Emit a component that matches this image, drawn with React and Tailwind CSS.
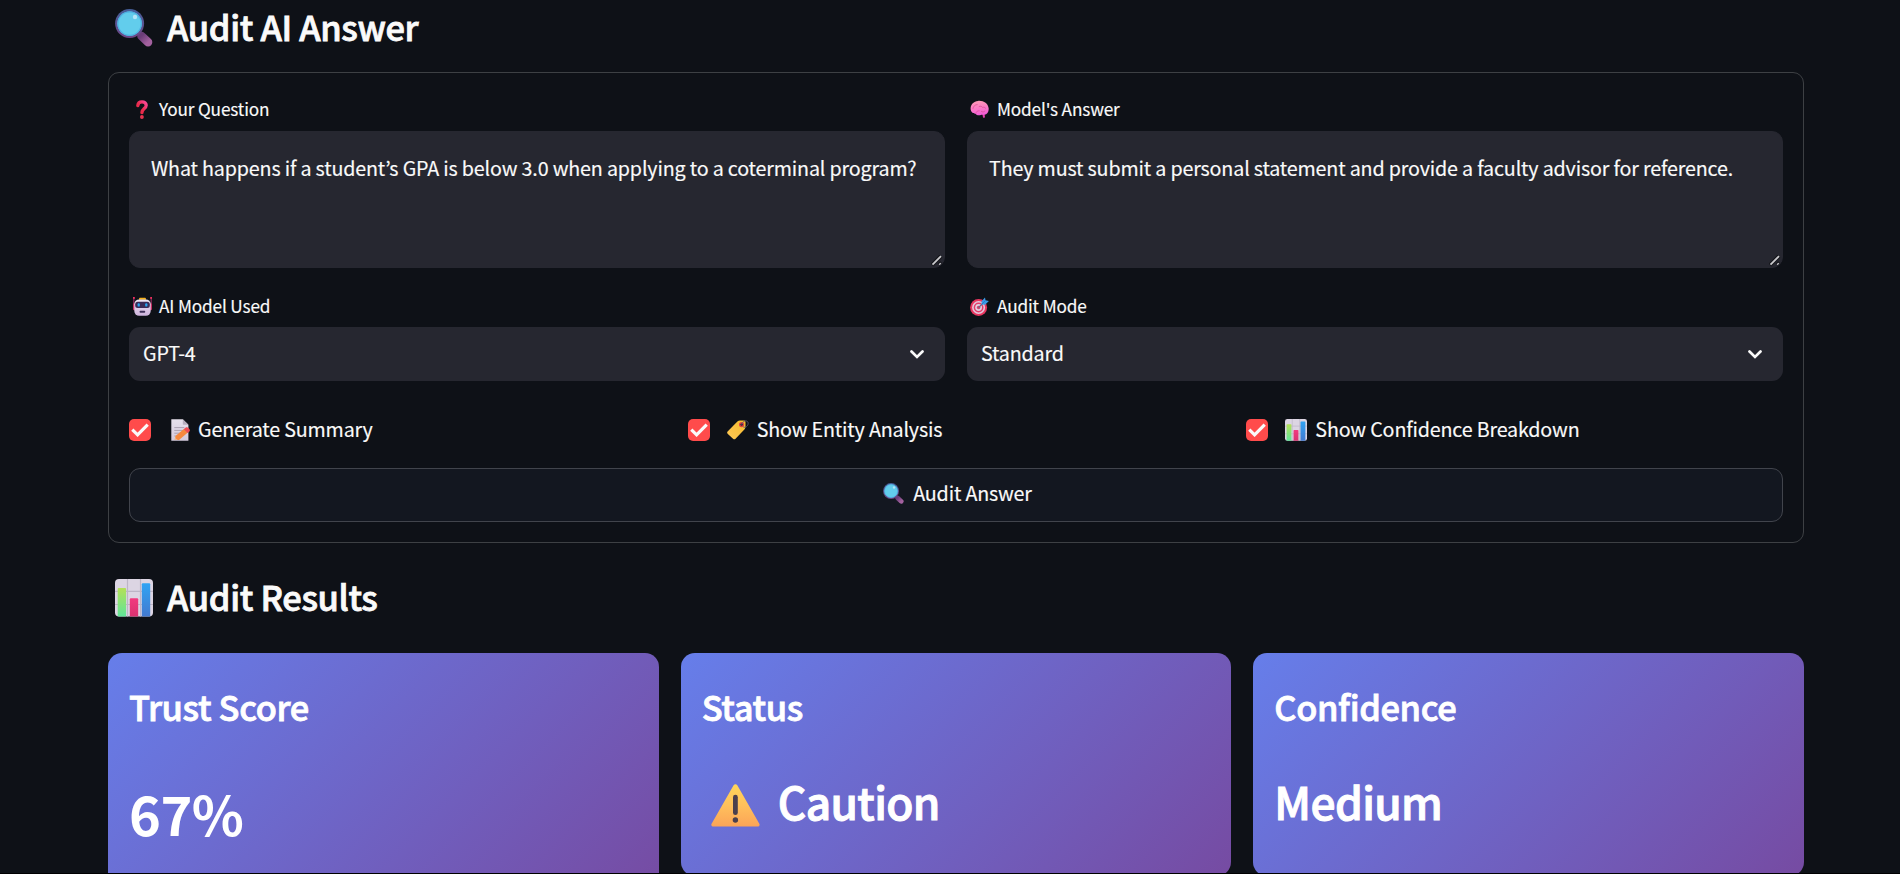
import React from "react";

function Magnifier({ className }) {
  return (
    <svg viewBox="0 0 38 38" className={className}>
      <defs>
        <linearGradient id="mg-handle" x1="0" y1="0" x2="1" y2="1">
          <stop offset="0" stopColor="#6b3d78" />
          <stop offset="1" stopColor="#a3619f" />
        </linearGradient>
        <linearGradient id="mg-rim" x1="0" y1="0" x2="0" y2="1">
          <stop offset="0" stopColor="#45609b" />
          <stop offset="1" stopColor="#6f4787" />
        </linearGradient>
      </defs>
      <path d="M26.500 27 L33 33.200" stroke="url(#mg-handle)" strokeWidth="8.6" strokeLinecap="round" />
      <circle cx="14.6" cy="14.6" r="14.5" fill="url(#mg-rim)" />
      <circle cx="14.6" cy="14.6" r="12.2" fill="#62cdec" />
      <circle cx="14.6" cy="14.6" r="11.7" fill="none" stroke="#4db3e3" strokeWidth="1.2" />
      <circle cx="20" cy="8" r="2.2" fill="#b3e6f8" />
    </svg>
  );
}

function BarChart({ className }) {
  return (
    <svg viewBox="0 0 38 38" className={className}>
      <defs>
        <linearGradient id="bc-green" x1="0" y1="0" x2="0" y2="1">
          <stop offset="0" stopColor="#b4e057" />
          <stop offset="1" stopColor="#5ee59a" />
        </linearGradient>
        <linearGradient id="bc-blue" x1="0" y1="0" x2="0" y2="1">
          <stop offset="0" stopColor="#2fa4f4" />
          <stop offset="1" stopColor="#4379cf" />
        </linearGradient>
        <linearGradient id="bc-pink" x1="0" y1="0" x2="0" y2="1">
          <stop offset="0" stopColor="#f23a80" />
          <stop offset="1" stopColor="#d8316f" />
        </linearGradient>
        <clipPath id="bc-clip">
          <rect width="38" height="37.5" rx="4" />
        </clipPath>
      </defs>
      <g clipPath="url(#bc-clip)">
        <rect width="38" height="38" fill="#dcd5e3" />
        <path d="M12.5 0V38M25.5 0V38M0 12.3H38M0 25.5H38" stroke="#bdb5c6" strokeWidth="1.2" />
        <rect x="2.7" y="9" width="8.4" height="29" rx="1" fill="url(#bc-green)" />
        <rect x="14.8" y="19.2" width="8.4" height="19" rx="1" fill="url(#bc-pink)" />
        <rect x="26.8" y="4.2" width="8.4" height="34" rx="1" fill="url(#bc-blue)" />
      </g>
    </svg>
  );
}

function QuestionMark({ className }) {
  return (
    <svg viewBox="0 0 12 19" className={className}>
      <defs>
        <linearGradient id="qm" x1="1" y1="0" x2="0" y2="1">
          <stop offset="0" stopColor="#fb4a9a" />
          <stop offset="0.55" stopColor="#ea2c50" />
          <stop offset="1" stopColor="#e8283f" />
        </linearGradient>
      </defs>
      <path
        d="M1.8 5.6C2 3 3.8 1.8 6 1.8c2.400 0 4.200 1.300 4.200 3.500C10.200 8.500 6.100 8.700 5.900 12.600"
        fill="none"
        stroke="url(#qm)"
        strokeWidth="3.3"
        strokeLinecap="round"
      />
      <circle cx="5.9" cy="17" r="1.9" fill="#e93450" />
    </svg>
  );
}

function Brain({ className }) {
  return (
    <svg viewBox="0 0 19 19" className={className}>
      <defs>
        <linearGradient id="br" x1="0" y1="0" x2="0.2" y2="1">
          <stop offset="0" stopColor="#ff9fb4" />
          <stop offset="0.55" stopColor="#fb7cc4" />
          <stop offset="1" stopColor="#f25fd6" />
        </linearGradient>
      </defs>
      <path d="M12.200 13l.9 4.800 1.900-.3-.6-4.500z" fill="#e43fae" />
      <path
        d="M.6 8.200C.9 4.200 3.800 1.300 8 .9c5.600-.5 10 2.700 10.600 7.200.5 3.500-1.200 6.300-4.300 6.700-1.400.2-2.500-.2-3.400.2-1.700.7-4.200.5-5.400-1.300C3.800 13.900.4 12.600.6 8.200z"
        fill="url(#br)"
      />
      <path
        d="M3 8.500c.3-2.300 2-3.900 4.200-3.900M6 13.100c.2-1.700 1.500-2.500 3.300-2.300M9.200 6.500c1.300-.7 2.600-.3 3.200.9 1.200-.5 2.500-.1 3.300.9M11.300 11.400c1.200.9 2.800.7 3.600-.4"
        fill="none"
        stroke="#dd5099"
        strokeWidth="0.8"
        strokeLinecap="round"
      />
    </svg>
  );
}

function Robot({ className }) {
  return (
    <svg viewBox="0 0 19 19" className={className}>
      <defs>
        <linearGradient id="rb" x1="0" y1="0" x2="0" y2="1">
          <stop offset="0" stopColor="#f0e8f4" />
          <stop offset="1" stopColor="#cdb2dc" />
        </linearGradient>
      </defs>
      <path d="M.8 1v6.500M18.200 1v6.500" stroke="#8c2a5c" strokeWidth="1.200" />
      <rect x="0" y="0" width="1.800" height="1.800" fill="#f0305e" />
      <rect x="17.200" y="0" width="1.800" height="1.800" fill="#f0305e" />
      <rect x="0" y="6.200" width="2.500" height="7" rx="1.200" fill="#c62c62" />
      <rect x="16.500" y="6.200" width="2.500" height="7" rx="1.200" fill="#c62c62" />
      <path d="M6 2.800V2c0-.8.600-1.300 1.400-1.300h4.200c.8 0 1.400.5 1.400 1.300v.8z" fill="#f8b31c" />
      <rect x="1.300" y="2.400" width="16.400" height="16.400" rx="4.800" fill="url(#rb)" />
      <rect x="2.200" y="4.800" width="14.600" height="6.200" rx="2.500" fill="#392a55" />
      <rect x="4.600" y="6.300" width="2.200" height="3.300" rx="0.900" fill="#26a3f0" />
      <rect x="12.200" y="6.300" width="2.200" height="3.300" rx="0.900" fill="#26a3f0" />
      <rect x="6.600" y="13.700" width="5.600" height="2" rx="0.700" fill="#40305a" />
    </svg>
  );
}

function Target({ className }) {
  return (
    <svg viewBox="0 0 19 19" className={className}>
      <circle cx="8.600" cy="10.500" r="8.500" fill="#e8365f" />
      <circle cx="8.600" cy="10.500" r="6.500" fill="#e3c9dd" />
      <circle cx="8.600" cy="10.500" r="4.900" fill="#e33c69" />
      <circle cx="8.600" cy="10.500" r="3.400" fill="#e3cfe0" />
      <circle cx="8.600" cy="10.500" r="1.800" fill="#d5456f" />
      <path d="M8.600 10.500 13.600 5.600" stroke="#66698a" strokeWidth="1.200" />
      <path d="M11.600 7.500V4.200L15 .4l.5 2.900 3.400.8-3.800 3.600z" fill="#3b9ce8" />
      <path d="M11.700 7.400 15.400 3.500" stroke="#256fc0" strokeWidth="0.700" />
    </svg>
  );
}

function Memo({ className }) {
  return (
    <svg viewBox="0 0 20 22" className={className}>
      <defs>
        <linearGradient id="mm" x1="0" y1="0" x2="0" y2="1">
          <stop offset="0" stopColor="#e6e0ec" />
          <stop offset="1" stopColor="#d4cadd" />
        </linearGradient>
      </defs>
      <path d="M.3.200H11.800l5.600 5.600V21.800H.3z" fill="url(#mm)" />
      <path d="M11.800.200l5.600 5.600h-4.500c-.7 0-1.100-.4-1.100-1.100z" fill="#b7adbe" />
      <path d="M3.300 8.600h10M3.300 11.400h10M3.300 14.200h7M3.300 17h3" stroke="#aaa0b2" strokeWidth="1" />
      <path d="M3.300 21.300l1.300-4.500 3.200 3.200z" fill="#e8b48a" />
      <path d="M4.500 17 13.200 9.800l3.600 3.800-8.800 7.300c-1.800.7-4-1.500-3.500-3.900z" fill="#f6893f" />
      <path d="M12.700 10.200l1.800-1.500c1-.7 2.400-.3 3.400.7s1.400 2.200.5 3.100l-1.700 1.400z" fill="#ef4b54" />
    </svg>
  );
}

function Tag({ className }) {
  return (
    <svg viewBox="0 0 22 20" className={className}>
      <defs>
        <linearGradient id="tg" x1="1" y1="0" x2="0" y2="1">
          <stop offset="0" stopColor="#f6bb2c" />
          <stop offset="1" stopColor="#ffc957" />
        </linearGradient>
      </defs>
      <path
        d="M.6 11.600 10.400 1.500C11.100.8 12 .5 13 .5h3.800c1 0 1.700.7 1.700 1.700v4.600c0 .9-.3 1.700-.9 2.400l-9.300 9.700c-.6.6-1.400.6-2 0L.6 13.700c-.6-.6-.6-1.500 0-2.100z"
        fill="url(#tg)"
      />
      <circle cx="14.600" cy="4.600" r="2.600" fill="#e2433f" />
      <circle cx="14.600" cy="4.600" r="1.200" fill="#2a2338" />
      <path
        d="M14.600 4.600C15.500 1.500 18 .2 20 1.200c1.900 1.100 1.300 4-.5 5.400-1.100.8-2.300.9-3.300.3"
        fill="none"
        stroke="#5d5675"
        strokeWidth="0.900"
      />
    </svg>
  );
}

function Warning({ className }) {
  return (
    <svg viewBox="0 0 49 43" className={className}>
      <defs>
        <linearGradient id="wn" x1="0" y1="0" x2="0" y2="1">
          <stop offset="0" stopColor="#ffd65a" />
          <stop offset="0.5" stopColor="#ffc05c" />
          <stop offset="1" stopColor="#fba457" />
        </linearGradient>
      </defs>
      <path
        d="M22.600 1.200c.8-1.400 2.900-1.400 3.700 0L48.300 39.700c.8 1.400-.1 2.900-1.700 2.900H2.300C.7 42.600-.2 41.100.6 39.700z"
        fill="url(#wn)"
      />
      <path d="M24.400 13.200V28.700" stroke="#4b3f4d" strokeWidth="4.800" strokeLinecap="round" />
      <circle cx="24.400" cy="36" r="2.700" fill="#4b3f4d" />
    </svg>
  );
}

function Grip() {
  return (
    <svg viewBox="0 0 12 12" className="pointer-events-none absolute right-[1px] bottom-0 h-[12px] w-[12px]">
      <path d="M1 10 10 1M8 10 10.500 7.500" stroke="#15161b" strokeWidth="4" />
      <path d="M1.500 9.700 10 1.200M8.300 9.900 9.900 8.300" stroke="#c9c9cc" strokeWidth="1.800" />
    </svg>
  );
}

function Field({ icon, label, children }) {
  return (
    <div className="flex min-w-0 flex-1 flex-col">
      <label className="flex h-[31px] items-center pl-[2px] text-[17.2px] leading-[31px] tracking-[-0.14px] text-[#fafafa] [-webkit-text-stroke:0.15px]">
        <span className="flex w-[28px] shrink-0 items-center pt-[1px]">{icon}</span>
        <span>{label}</span>
      </label>
      {children}
    </div>
  );
}

function TextArea({ value }) {
  return (
    <div className="relative mt-[7px] h-[137px] overflow-hidden rounded-[11px] border border-[#262730] bg-[#262730]">
      <textarea
        className="block h-[135px] w-full resize-none bg-transparent pt-[18px] pr-[18px] pl-[21px] text-[19.7px] leading-[35px] tracking-[-0.165px] text-[#fafafa] outline-none [-webkit-text-stroke:0.15px]"
        defaultValue={value}
      />
      <Grip />
    </div>
  );
}

function Select({ value }) {
  return (
    <div className="mt-[6px] flex h-[54px] items-center justify-between rounded-[11px] bg-[#262730] pr-[21px] pl-[14px] text-[19.7px] tracking-[-0.17px] text-[#fafafa] [-webkit-text-stroke:0.15px]">
      <span className="pb-[3px] leading-[35px]">{value}</span>
      <svg viewBox="0 0 14 9" className="h-[9px] w-[14px]">
        <path d="M1.500 1.500 7 6.900l5.500-5.400" fill="none" stroke="#fafafa" strokeWidth="2.700" strokeLinecap="round" />
      </svg>
    </div>
  );
}

function Check({ icon, label }) {
  return (
    <div className="flex h-[35px] flex-1 items-center text-[19.7px] leading-[35px] tracking-[-0.17px] text-[#fafafa] [-webkit-text-stroke:0.15px]">
      <span className="mt-[1px] flex h-[22px] w-[22px] items-center justify-center rounded-[5px] bg-[#ff4b4b]">
        <svg viewBox="0 0 18 14" className="h-[14px] w-[18px]">
          <path d="M1.300 6.600 6.600 11.800 16.700 1.600" fill="none" stroke="#fafafa" strokeWidth="3.200" />
        </svg>
      </span>
      <span className="ml-[20px] flex w-[27px] items-center">{icon}</span>
      <span className="-mt-[2px] whitespace-nowrap">{label}</span>
    </div>
  );
}

function Card({ title, className, children }) {
  return (
    <div
      className={
        "flex flex-1 flex-col rounded-[14px] bg-[linear-gradient(135deg,#667eea_0%,#764ba2_100%)] px-[21px] text-white " +
        className
      }
    >
      <h3 className="mt-[30px] text-[34.450px] leading-[46px] font-medium tracking-[-0.38px] [-webkit-text-stroke:0.8px]">
        {title}
      </h3>
      {children}
    </div>
  );
}

export default function App() {
  return (
    <div className="flex h-[874px] w-[1900px] flex-col overflow-hidden border-b border-black bg-[#0e1117] pr-[96px] pl-[108px] font-['Noto_Sans_CJK_JP',sans-serif]">
      <h2 className="mt-[3px] flex h-[46px] shrink-0 items-center text-[34.450px] leading-[46px] font-medium tracking-[-0.36px] text-[#fafafa]">
        <Magnifier className="mt-[4px] mr-[14px] ml-[7px] h-[38px] w-[38px]" />
        <span className="[-webkit-text-stroke:0.8px]">Audit AI Answer</span>
      </h2>

      <form className="mt-[23px] flex h-[471px] shrink-0 flex-col rounded-[11px] border border-[#3d4044] p-[20px]">
        <div className="flex gap-[22px]">
          <Field icon={<QuestionMark className="ml-[5px] h-[19px] w-[12px]" />} label="Your Question">
            <TextArea value="What happens if a student’s GPA is below 3.0 when applying to a coterminal program?" />
          </Field>
          <Field icon={<Brain className="ml-[1px] h-[19px] w-[19px]" />} label="Model's Answer">
            <TextArea value="They must submit a personal statement and provide a faculty advisor for reference." />
          </Field>
        </div>
        <div className="mt-[22px] flex gap-[22px]">
          <Field icon={<Robot className="ml-[2px] h-[19px] w-[19px]" />} label="AI Model Used">
            <Select value="GPT-4" />
          </Field>
          <Field icon={<Target className="ml-[1px] h-[19px] w-[19px]" />} label="Audit Mode">
            <Select value="Standard" />
          </Field>
        </div>
        <div className="mt-[31px] flex gap-[22px]">
          <Check icon={<Memo className="h-[22px] w-[20px]" />} label="Generate Summary" />
          <Check icon={<Tag className="ml-[-3px] h-[20px] w-[22px]" />} label="Show Entity Analysis" />
          <Check icon={<BarChart className="ml-[-3px] h-[22px] w-[22px]" />} label="Show Confidence Breakdown" />
        </div>
        <button
          type="button"
          className="mt-[21px] flex h-[54px] items-center justify-center rounded-[11px] border border-[#41444c] bg-[#131720] pl-[3px] text-[19.7px] leading-[35px] tracking-[-0.17px] text-[#fafafa] [-webkit-text-stroke:0.15px]"
        >
          <Magnifier className="-mt-[3px] mr-[9px] h-[21px] w-[21px]" />
          <span className="-mt-[5px]">Audit Answer</span>
        </button>
      </form>

      <h2 className="mt-[30px] flex h-[46px] shrink-0 items-center text-[34.450px] leading-[46px] font-medium tracking-[-0.36px] text-[#fafafa]">
        <BarChart className="mt-[4px] mr-[14px] ml-[7px] h-[38px] w-[38px]" />
        <span className="[-webkit-text-stroke:0.8px]">Audit Results</span>
      </h2>

      <div className="mt-[34px] flex shrink-0 items-start gap-[22px]">
        <Card title="Trust Score" className="h-[240px]">
          <div className="mt-[44px] text-[54.100px] leading-[80px] font-bold tracking-[-0.5px]">67%</div>
        </Card>
        <Card title="Status" className="h-[223px]">
          <div className="mt-[42px] flex h-[60px] items-center text-[44.300px] leading-[60px] font-medium tracking-[-0.65px]">
            <Warning className="mt-[9px] mr-[18px] ml-[9px] h-[43px] w-[49px]" />
            <span className="[-webkit-text-stroke:1px]">Caution</span>
          </div>
        </Card>
        <Card title="Confidence" className="h-[223px]">
          <div className="mt-[42px] text-[44.300px] leading-[60px] font-medium tracking-[-0.65px] [-webkit-text-stroke:1px]">
            Medium
          </div>
        </Card>
      </div>
    </div>
  );
}
